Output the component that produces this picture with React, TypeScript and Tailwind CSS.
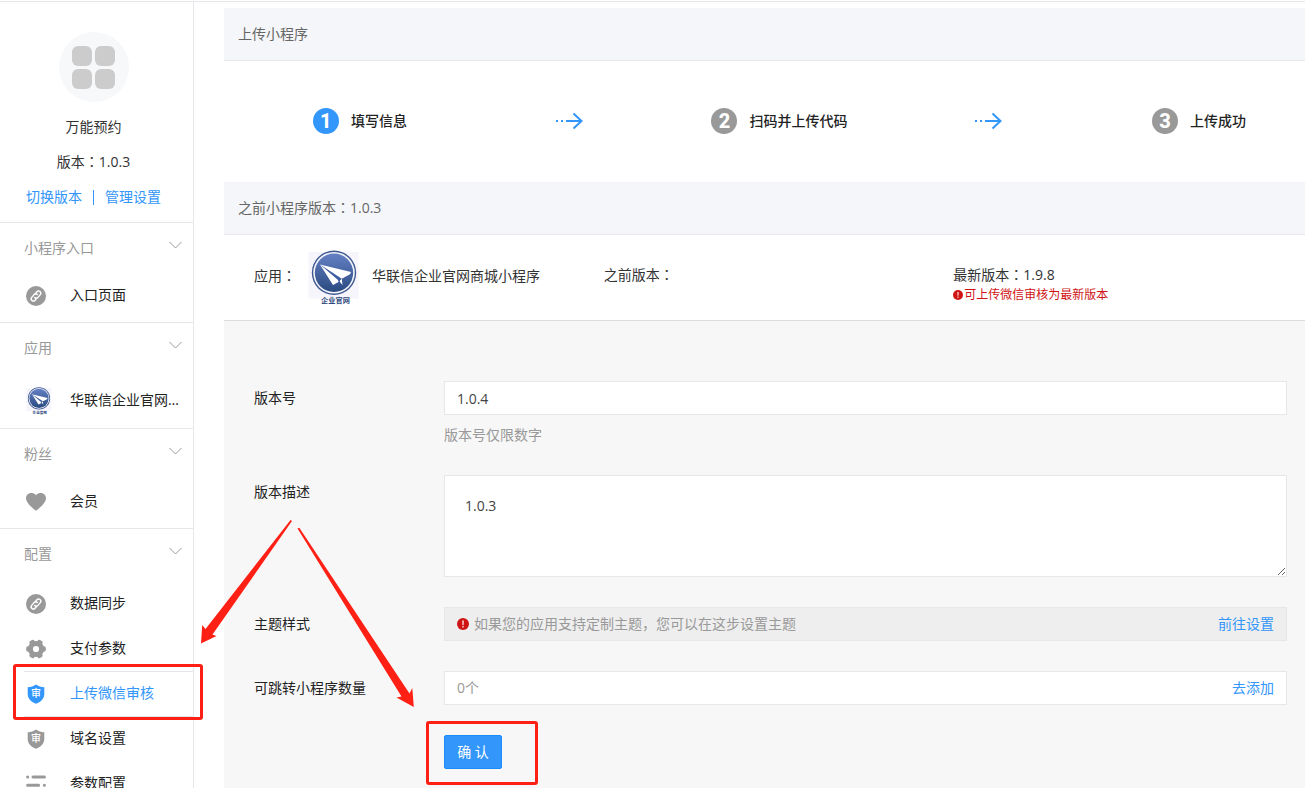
import type { ReactNode } from "react";

const Colon = () => <span className="font-['Noto_Sans_CJK_TC',sans-serif] leading-none">：</span>;

function AppLogo({ className }: { className: string }) {
  return (
    <svg viewBox="0 0 52 56" className={className} aria-hidden="true">
      <defs>
        <linearGradient id="logoFill" x1="0" y1="0" x2="0" y2="1">
          <stop offset="0" stopColor="#6480c4" />
          <stop offset="1" stopColor="#2a4a80" />
        </linearGradient>
      </defs>
      <rect x="0.5" y="2" width="50" height="46.5" fill="#f6f5fb" />
      <circle cx="26" cy="22.8" r="22.2" fill="#3d5792" />
      <circle cx="26" cy="22.8" r="20.8" fill="#f4f5fb" />
      <circle cx="26" cy="22.8" r="19.2" fill="url(#logoFill)" />
      <path d="M12 14.5 L43 22 L42 24.3 L33.8 28.7 L34.5 35 L31.5 31.5 L25 35 Z" fill="#fff" />
      <path d="M12 14.5 L33.8 28.7 L32 30.6 L31.3 34.2 L30 30 Z" fill="#3c5ba0" />
      <text
        x="27.5"
        y="53"
        textAnchor="middle"
        fontSize="7.2"
        fontWeight="700"
        fill="#2f4a80"
        className="font-['Noto_Sans_CJK_SC',sans-serif]"
      >
        企业官网
      </text>
    </svg>
  );
}

function LinkIcon() {
  return (
    <svg viewBox="0 0 20 20" className="size-5" aria-hidden="true">
      <circle cx="10" cy="10" r="10" fill="#999" />
      <g transform="rotate(-50 10 10)" fill="none" stroke="#fff" strokeWidth="1.4" strokeLinecap="round">
        <path d="M8.6 12 H6.2 a2.2 2.2 0 0 1 0 -4.4 H9.8 a2.2 2.2 0 0 1 2.2 2.4" />
        <path d="M11.4 8 H13.8 a2.2 2.2 0 0 1 0 4.400 H10.2 a2.2 2.2 0 0 1 -2.2 -2.400" />
      </g>
    </svg>
  );
}

function HeartIcon() {
  return (
    <svg viewBox="0 0 20 20" className="size-5" aria-hidden="true">
      <path
        d="M10 3.2 C8.6 1.4 6.8 1 5.3 1 C2.2 1 0 3.3 0 6.3 C0 10.6 5.8 15.6 10 18.8 C14.2 15.6 20 10.6 20 6.3 C20 3.3 17.8 1 14.7 1 C13.2 1 11.4 1.4 10 3.2 Z"
        fill="#999"
      />
    </svg>
  );
}

function GearIcon() {
  return (
    <svg viewBox="0 0 20 20" className="size-5" aria-hidden="true">
      <circle cx="10" cy="10" r="5.6" fill="none" stroke="#999" strokeWidth="5" />
      <g fill="#999">
        {[30, 90, 150, 210, 270, 330].map((a) => (
          <rect key={a} x="7.2" y="0.2" width="5.6" height="5" rx="1.8" transform={`rotate(${a} 10 10)`} />
        ))}
      </g>
    </svg>
  );
}

function ShieldIcon({ color }: { color: string }) {
  return (
    <svg viewBox="0 0 20 20" className="size-5" aria-hidden="true">
      <path
        d="M10 0.4 C12.2 2 15 3 18.3 3.2 V10 C18.3 14.8 14.6 18 10 19.8 C5.4 18 1.7 14.8 1.7 10 V3.2 C5 3 7.8 2 10 0.4 Z"
        fill={color}
      />
      <text
        x="10"
        y="13.4"
        textAnchor="middle"
        fontSize="10"
        fontWeight="500"
        fill="#fff"
        className="font-['Noto_Sans_CJK_SC',sans-serif]"
      >
        审
      </text>
    </svg>
  );
}

function SlidersIcon() {
  return (
    <svg viewBox="0 0 20 20" className="size-5" aria-hidden="true">
      <g stroke="#999" strokeWidth="3" strokeLinecap="round">
        <path d="M1.6 3 H1.7 M7 3 H18.4 M1.6 11.2 H12.6 M18.3 11.2 H18.4 M1.6 19.4 H1.7 M7 19.4 H18.4" />
      </g>
    </svg>
  );
}

function InfoIcon({ className }: { className: string }) {
  return (
    <svg viewBox="0 0 12 12" className={className} aria-hidden="true">
      <circle cx="6" cy="6" r="6" fill="#d01414" />
      <path d="M5.1 2.4 H6.9 L6.7 7 H5.3 Z" fill="#f3c9c9" />
      <rect x="5.2" y="7.9" width="1.6" height="1.6" fill="#f3c9c9" />
    </svg>
  );
}

function StepArrow() {
  return (
    <svg viewBox="0 0 28 18" className="h-[18px] w-7" fill="none" stroke="#3296fa" aria-hidden="true">
      <path d="M1 9 H3 M6 9 H8" strokeWidth="2" />
      <path d="M11 9 H26 M18.5 1.5 L26.5 9 L18.5 16.5" strokeWidth="2" />
    </svg>
  );
}

function Section({ title, children }: { title: string; children: ReactNode }) {
  return (
    <section className="border-b border-[#e7e7eb]">
      <div className="flex h-[50px] items-center justify-between pr-[11px] pl-6 text-[#999]">
        <h2>{title}</h2>
        <svg viewBox="0 0 13 8" className="mb-1.5 h-2 w-[13px]" fill="none" stroke="#999" aria-hidden="true">
          <path d="M0.5 1 L6.5 7 L12.5 1" />
        </svg>
      </div>
      {children}
    </section>
  );
}

function NavItem({
  icon,
  label,
  active = false,
  divided = false,
  tall = false,
}: {
  icon: ReactNode;
  label: string;
  active?: boolean;
  divided?: boolean;
  tall?: boolean;
}) {
  return (
    <a
      href="#"
      className={`ml-6 flex items-center ${tall ? "h-[55px]" : "h-[45px]"} ${divided ? "border-t border-[#e7e7eb]" : ""} ${active ? "text-[#3296fa]" : "text-[#222]"}`}
    >
      <span className="flex w-[46px] shrink-0 items-center pl-0.5">{icon}</span>
      <span className="mb-0.5 truncate pr-3">{label}</span>
    </a>
  );
}

function Step({ n, label, active = false }: { n: number; label: string; active?: boolean }) {
  return (
    <li className="flex items-center justify-center gap-3 pl-0.5">
      <span
        className={`flex size-[26px] items-center justify-center rounded-full font-['Liberation_Sans_Narrow',Roboto,sans-serif] text-xl leading-5 font-extrabold text-white ${active ? "bg-[#3296fa]" : "bg-[#999]"}`}
      >
        {n}
      </span>
      <span className="font-medium text-[#222]">{label}</span>
    </li>
  );
}

export default function App() {
  return (
    <div className="relative flex h-screen flex-col overflow-hidden bg-white pt-px font-['Open_Sans','Noto_Sans_CJK_SC',sans-serif] text-sm leading-5 text-[#333]">
      <div className="flex min-h-0 flex-1 border-t border-[#e7e7eb]">
        <aside className="w-[194px] shrink-0 overflow-hidden border-r border-[#e7e7eb]">
          <div className="flex flex-col items-center border-b border-[#e7e7eb] pt-[30px] pr-1.5 pb-[15px]">
            <div className="flex size-[70px] items-center justify-center rounded-full bg-[#f7f8fa]">
              <div className="grid grid-cols-2 gap-[3px]">
                <span className="size-5 rounded-md bg-[#ccc]" />
                <span className="size-5 rounded-md bg-[#ccc]" />
                <span className="size-5 rounded-md bg-[#ccc]" />
                <span className="size-5 rounded-md bg-[#ccc]" />
              </div>
            </div>
            <div className="mt-[15px]">万能预约</div>
            <div className="mt-[15px]">
              版本
              <Colon />
              1.0.3
            </div>
            <div className="mt-[15px] flex items-center gap-[11px] text-[#3296fa]">
              <a href="#">切换版本</a>
              <span className="h-[15px] w-px bg-[#3296fa]" />
              <a href="#">管理设置</a>
            </div>
          </div>
          <nav>
            <Section title="小程序入口">
              <div className="pb-1">
                <NavItem icon={<LinkIcon />} label="入口页面" />
              </div>
            </Section>
            <Section title="应用">
              <NavItem tall icon={<AppLogo className="h-[30px] w-[26px]" />} label="华联信企业官网商城小程序" />
            </Section>
            <Section title="粉丝">
              <div className="pb-1">
                <NavItem icon={<HeartIcon />} label="会员" />
              </div>
            </Section>
            <Section title="配置">
              <div className="pt-0.5">
                <NavItem icon={<LinkIcon />} label="数据同步" />
                <NavItem icon={<GearIcon />} label="支付参数" />
                <NavItem divided active icon={<ShieldIcon color="#3296fa" />} label="上传微信审核" />
                <NavItem divided icon={<ShieldIcon color="#999" />} label="域名设置" />
                <NavItem icon={<SlidersIcon />} label="参数配置" />
              </div>
            </Section>
          </nav>
        </aside>

        <main className="ml-[30px] flex min-w-0 flex-1 flex-col pt-1.5">
          <h1 className="border-b border-[#e7e7eb] bg-[#f4f6f9] px-3.5 py-4 text-[#666]">上传小程序</h1>

          <ol className="grid h-[121px] shrink-0 grid-cols-5 items-center pr-0.5 pb-0.5 pl-[30px]">
            <Step n={1} label="填写信息" active />
            <li className="flex justify-center">
              <StepArrow />
            </li>
            <Step n={2} label="扫码并上传代码" />
            <li className="flex justify-center">
              <StepArrow />
            </li>
            <Step n={3} label="上传成功" />
          </ol>

          <h2 className="border-b border-[#e7e7eb] bg-[#f4f6f9] px-3.5 py-4 text-[#666]">
            之前小程序版本
            <Colon />
            1.0.3
          </h2>

          <div className="grid h-[86px] shrink-0 grid-cols-3 items-start border-b border-[#ddd] pt-[15px] pr-0.5 pl-[30px]">
            <div className="flex items-start">
              <span className="w-[54px] pt-4">
                应用
                <Colon />
              </span>
              <AppLogo className="h-14 w-[52px]" />
              <span className="pt-4 pl-3">华联信企业官网商城小程序</span>
            </div>
            <div className="pt-[15px]">
              之前版本
              <Colon />
            </div>
            <div className="pt-[15px]">
              <div>
                最新版本
                <Colon />
                1.9.8
              </div>
              <div className="flex items-center gap-px text-xs leading-5 text-[#d01414]">
                <InfoIcon className="size-2.5" />
                可上传微信审核为最新版本
              </div>
            </div>
          </div>

          <form className="flex flex-1 flex-col bg-[#f7f7f7] pt-[60px] pr-[18px] pl-[30px]">
            <div className="flex">
              <label htmlFor="version" className="w-[190px] shrink-0 leading-[34px] text-[#222]">
                版本号
              </label>
              <div className="flex-1">
                <input
                  id="version"
                  defaultValue="1.0.4"
                  className="block h-[34px] w-full border border-[#e7e7eb] bg-white px-3 text-[#444] outline-none"
                />
                <p className="pt-2.5 text-[#999]">版本号仅限数字</p>
              </div>
            </div>

            <div className="mt-[30px] flex">
              <label htmlFor="description" className="w-[190px] shrink-0 leading-[34px] text-[#222]">
                版本描述
              </label>
              <textarea
                id="description"
                defaultValue="1.0.3"
                className="block h-[102px] flex-1 resize border border-[#e7e7eb] bg-white p-5 text-[#444] outline-none"
              />
            </div>

            <div className="mt-[30px] flex">
              <span className="w-[190px] shrink-0 leading-[34px] text-[#222]">主题样式</span>
              <div className="flex h-[34px] flex-1 items-center border border-[#e7e7e7] bg-[#eee] px-3 text-[#999]">
                <InfoIcon className="mr-[5px] size-3" />
                <span className="flex-1">如果您的应用支持定制主题，您可以在这步设置主题</span>
                <a href="#" className="text-[#3296fa]">
                  前往设置
                </a>
              </div>
            </div>

            <div className="mt-[30px] flex">
              <span className="w-[190px] shrink-0 leading-[34px] text-[#222]">可跳转小程序数量</span>
              <div className="flex h-[34px] flex-1 items-center justify-between border border-[#e7e7e7] bg-white px-3 text-[#999]">
                <span>0个</span>
                <a href="#" className="text-[#3296fa]">
                  去添加
                </a>
              </div>
            </div>

            <button
              type="button"
              className="mt-[30px] ml-[190px] h-[34px] w-[58px] shrink-0 rounded-xs border border-[#1a8cff] bg-[#3296fa] text-white"
            >
              确 认
            </button>
          </form>
        </main>
      </div>

      <div className="pointer-events-none absolute top-[664px] left-[13px] h-14 w-[190px] rounded-[3px] border-3 border-[#ff2015]" />
      <div className="pointer-events-none absolute top-[721px] left-[426px] h-16 w-28 rounded-[3px] border-3 border-[#ff2015]" />
      <svg
        viewBox="0 0 220 190"
        className="pointer-events-none absolute top-[520px] left-[200px] h-[190px] w-[220px]"
        fill="#ff2015"
        aria-hidden="true"
      >
        <path d="M90.5 0 L92 1 L12.5 114.5 L16.5 116 L1 123.5 L2.2 105 L5.5 109 Z" />
        <path d="M97.5 8.5 L99.3 7.8 L209.5 173.5 L212.3 168 L213.8 187 L196.5 177.5 L201.5 176.5 Z" />
      </svg>
    </div>
  );
}
